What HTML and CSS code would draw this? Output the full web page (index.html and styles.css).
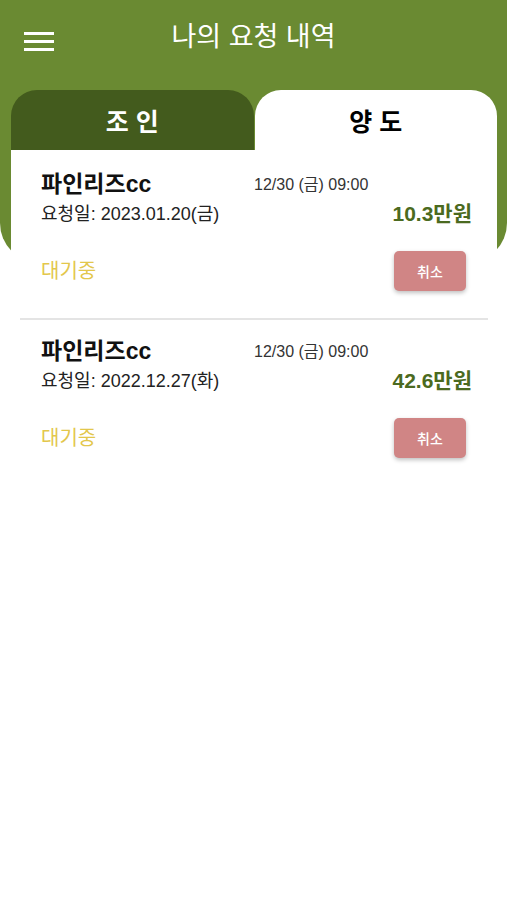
FILE: index.html
```html
<!DOCTYPE html>
<html lang="ko">
<head>
    <meta charset="UTF-8">
    <meta name="viewport" content="width=device-width, initial-scale=1.0">
    <title>나의 요청 내역</title>
    <link rel="stylesheet" href="styles.css">
</head>
<body>
    <div class="hero">
        <div class="topbar">
            <button class="menu-btn" aria-label="메뉴">
                <svg width="30" height="20" viewBox="0 0 30 20">
                    <rect x="0" y="0" width="30" height="3" fill="#fff"/>
                    <rect x="0" y="8" width="30" height="3" fill="#fff"/>
                    <rect x="0" y="16" width="30" height="3" fill="#fff"/>
                </svg>
            </button>
            <h1 class="title">나의 요청 내역</h1>
        </div>
        <div class="tabs">
            <div class="tab">조 인</div>
            <div class="tab active">양 도</div>
        </div>
    </div>

    <div class="list">
        <div class="card">
            <div class="name">파인리즈cc</div>
            <div class="when">12/30 (금) 09:00</div>
            <div class="req">요청일: 2023.01.20(금)</div>
            <div class="price">10.3만원</div>
            <div class="status">대기중</div>
            <button class="cancel">취소</button>
        </div>
        <div class="card">
            <div class="name">파인리즈cc</div>
            <div class="when">12/30 (금) 09:00</div>
            <div class="req">요청일: 2022.12.27(화)</div>
            <div class="price">42.6만원</div>
            <div class="status">대기중</div>
            <button class="cancel">취소</button>
        </div>
    </div>
</body>
</html>
```

FILE: styles.css
```css
body {
    margin: 0;
    font-family: "Liberation Sans", "Noto Sans CJK KR", sans-serif;
    background: #fff;
    color: #111;
}
.hero {
    background: #6a8a32;
    height: 263px;
    border-radius: 0 0 40px 40px;
    display: flex;
    flex-direction: column;
}
.topbar {
    position: relative;
    height: 90px;
    display: flex;
    align-items: flex-start;
    justify-content: center;
}
.menu-btn {
    position: absolute;
    left: 24px;
    top: 32px;
    padding: 0;
    border: 0;
    background: none;
    line-height: 0;
}
.title {
    margin: 19px 0 0;
    font-size: 27px;
    line-height: 36px;
    font-weight: 400;
    color: #fff;
}
.tabs {
    display: grid;
    grid-template-columns: 1fr 1fr;
    gap: 1px;
    margin: 0 10px 0 11px;
    height: 60px;
}
.tab {
    display: flex;
    align-items: center;
    justify-content: center;
    background: #435b1d;
    color: #fff;
    font-size: 25px;
    font-weight: 700;
    border-radius: 26px 26px 0 0;
}
.tab.active {
    background: #fff;
    color: #000;
}
.list {
    margin: -113px 10px 0 11px;
    background: #fff;
    position: relative;
    padding-top: 3px;
}
.card {
    margin: 0 9px;
    padding: 17px 22px 27px 21px;
    border-bottom: 2px solid #e4e4e4;
    display: grid;
    grid-template-columns: 213px 1fr auto;
    align-items: center;
}
.card:last-child {
    border-bottom: 0;
}
.name {
    font-size: 23px;
    font-weight: 700;
    line-height: 26px;
}
.when {
    grid-column: 2 / 4;
    font-size: 16px;
    line-height: 26px;
    color: #333;
    padding-top: 2px;
}
.req {
    grid-column: 1 / 3;
    margin-top: 4px;
    font-size: 18px;
    line-height: 24px;
    color: #222;
}
.price {
    margin-top: 4px;
    margin-right: -6px;
    font-size: 21px;
    line-height: 24px;
    font-weight: 700;
    color: #4b6a20;
    text-align: right;
}
.status {
    grid-column: 1 / 3;
    margin-top: 25px;
    font-size: 20px;
    line-height: 40px;
    color: #e3c74c;
}
.cancel {
    grid-column: 3;
    justify-self: end;
    margin-top: 25px;
    width: 72px;
    height: 40px;
    border: 0;
    border-radius: 5px;
    background: #d08585;
    color: #fff;
    font-family: inherit;
    font-size: 14px;
    font-weight: 500;
    box-shadow: 0 2px 4px rgba(0, 0, 0, 0.25);
}
```
